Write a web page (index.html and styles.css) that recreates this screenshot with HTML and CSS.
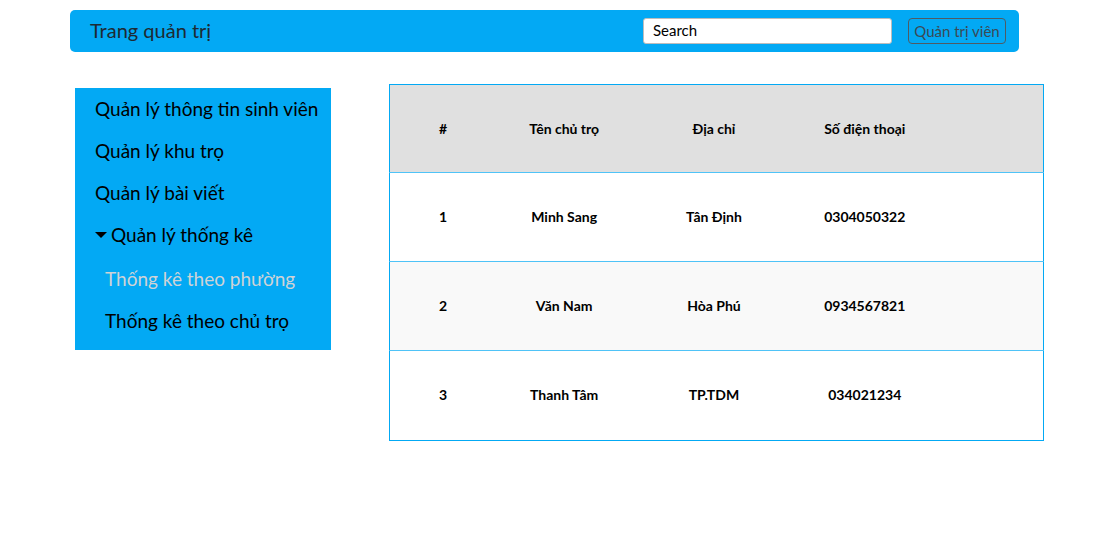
FILE: index.html
```html
<!DOCTYPE html>
<html lang="vi">
<head>
<meta charset="utf-8">
<title>Trang quản trị</title>
<link rel="stylesheet" href="styles.css">
</head>
<body>
<header class="topbar">
  <div class="brand">Trang quản trị</div>
  <input class="search" type="text" value="Search">
  <button class="admin-btn">Quản trị viên</button>
</header>
<main class="main">
  <nav class="sidebar">
    <div class="nav-item">Quản lý thông tin sinh viên</div>
    <div class="nav-item">Quản lý khu trọ</div>
    <div class="nav-item">Quản lý bài viết</div>
    <div class="nav-item nav-open"><span class="caret"></span>Quản lý thống kê</div>
    <div class="sub-list">
      <div class="sub-item sub-active">Thống kê theo phường</div>
      <div class="sub-item">Thống kê theo chủ trọ</div>
    </div>
  </nav>
  <section class="table-wrap">
    <table class="data">
      <thead>
        <tr>
          <th class="c1">#</th>
          <th class="c2">Tên chủ trọ</th>
          <th class="c3">Địa chỉ</th>
          <th class="c4">Số điện thoại</th>
          <th class="c5"></th>
        </tr>
      </thead>
      <tbody>
        <tr><td>1</td><td>Minh Sang</td><td>Tân Định</td><td>0304050322</td><td></td></tr>
        <tr class="alt"><td>2</td><td>Văn Nam</td><td>Hòa Phú</td><td>0934567821</td><td></td></tr>
        <tr class="last"><td>3</td><td>Thanh Tâm</td><td>TP.TDM</td><td>034021234</td><td></td></tr>
      </tbody>
    </table>
  </section>
</main>
</body>
</html>
```
FILE: styles.css
```css
* { box-sizing: border-box; }
body {
  margin: 0;
  background: #fff;
  font-family: Lato, "Open Sans", sans-serif;
  color: #000;
}
.topbar {
  margin: 10px 0 0 70px;
  width: 949px;
  height: 42px;
  background: #03a9f4;
  border-radius: 5px;
  display: flex;
  align-items: center;
  padding: 0 13px 0 20px;
}
.brand {
  font-size: 20px;
  line-height: 24px;
  padding-bottom: 2px;
  color: #1e2a33;
  flex: 1;
}
.search {
  width: 249px;
  height: 26px;
  border: 1px solid #bdbdbd;
  border-radius: 3px;
  background: #fff;
  font-family: inherit;
  font-size: 15px;
  color: #000;
  padding: 0 9px 2px;
  outline: none;
}
.admin-btn {
  margin-left: 16px;
  width: 98px;
  height: 26px;
  background: transparent;
  border: 1px solid #4f5b63;
  border-radius: 4px;
  font-family: inherit;
  font-size: 15px;
  color: #3c4a54;
  padding: 0 0 1px;
}
.main {
  display: flex;
  align-items: flex-start;
  padding-left: 75px;
  margin-top: 32px;
}
.sidebar {
  width: 256px;
  margin-top: 4px;
  background: #03a9f4;
  padding-bottom: 8px;
}
.nav-item {
  height: 42px;
  display: flex;
  align-items: center;
  padding: 0 0 2px 20px;
  font-size: 19px;
  color: #000;
}
.caret {
  width: 0;
  height: 0;
  border-left: 6px solid transparent;
  border-right: 6px solid transparent;
  border-top: 6px solid #000;
  margin: 2px 4px 0 0;
}
.sub-list {
  padding-top: 2px;
}
.sub-item {
  height: 42px;
  display: flex;
  align-items: center;
  padding: 0 0 2px 30px;
  font-size: 19px;
  color: #000;
}
.sub-active {
  color: #cfd3d6;
}
.table-wrap {
  margin-left: 58px;
}
.data {
  width: 655px;
  border-collapse: collapse;
  border: 1px solid #03a9f4;
  font-size: 14px;
  font-weight: 700;
  text-align: center;
}
.data th {
  height: 88px;
  background: #e0e0e0;
  font-weight: 700;
  padding-bottom: 1px;
}
.data td {
  height: 89px;
  border-top: 1px solid #4fc3f7;
  padding-bottom: 2px;
}
.data tr.last td {
  height: 90px;
  padding-bottom: 4px;
}
.data tr.alt td {
  background: #f9f9f9;
}
.c1 { width: 107px; }
.c2 { width: 136px; }
.c3 { width: 164px; }
.c4 { width: 138px; }
.c5 { width: 110px; }
```
